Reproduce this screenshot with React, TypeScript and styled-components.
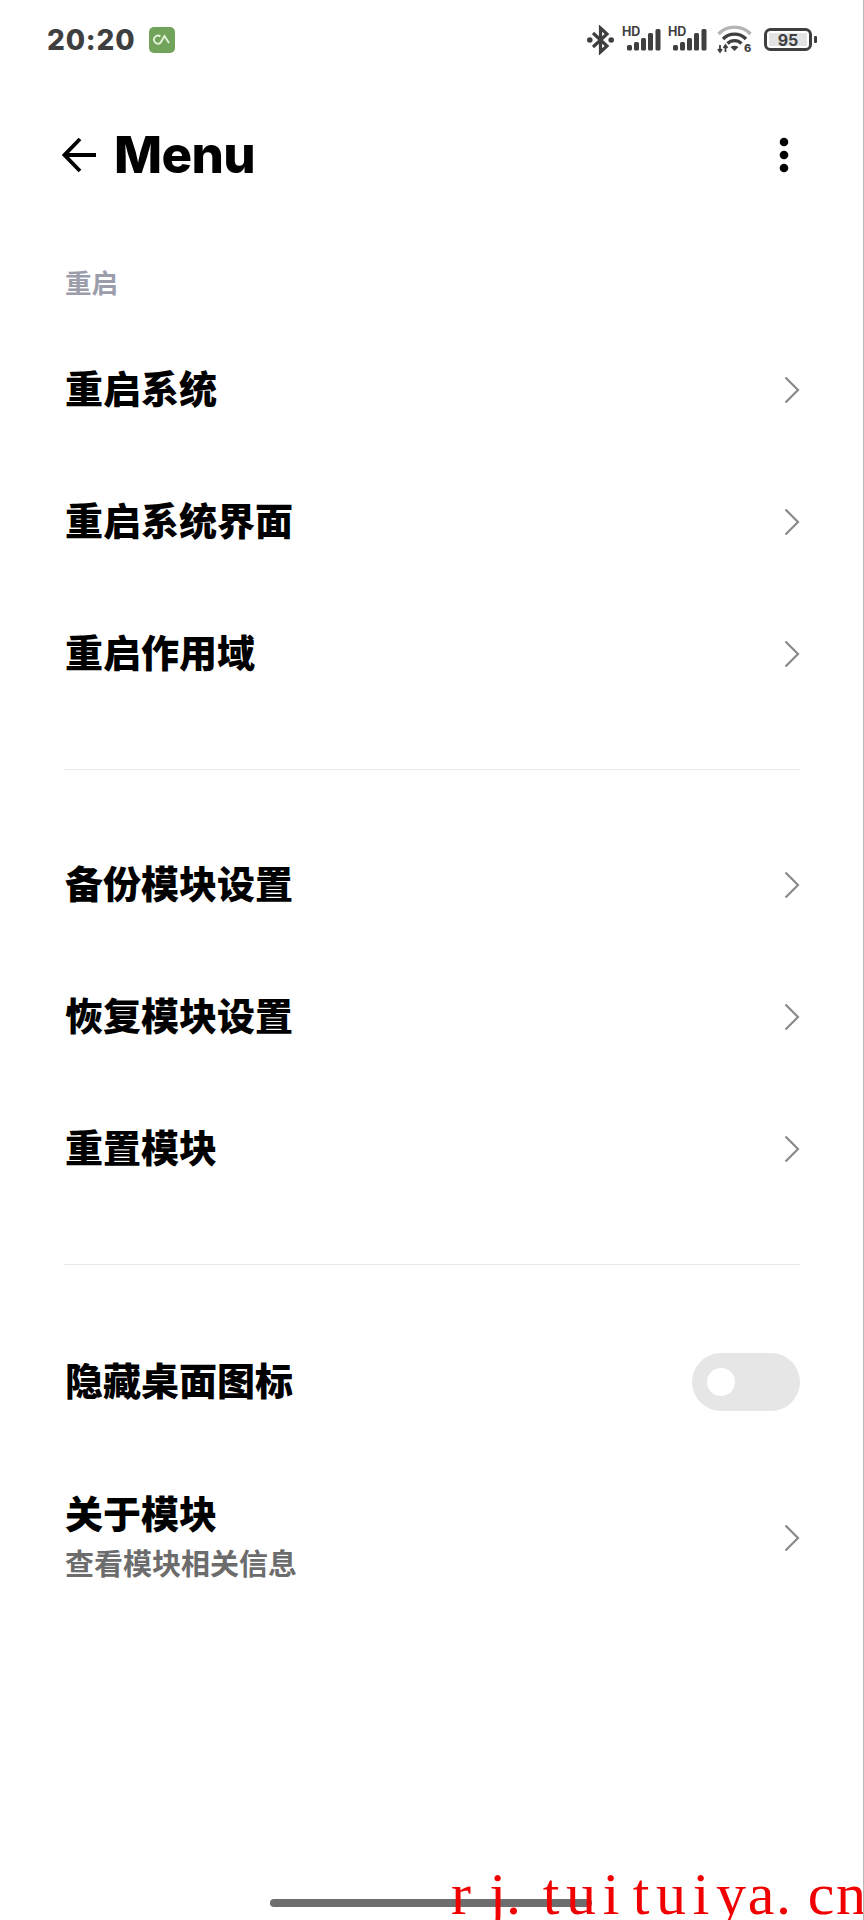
import React from "react";
import styled, { createGlobalStyle } from "styled-components";

const GlobalStyle = createGlobalStyle`
    html, body {
        margin: 0;
        padding: 0;
        background: #fff;
    }
    body {
        font-family: "Inter", "Noto Sans CJK SC", sans-serif;
    }
`

const Page = styled.div`
    position: relative;
    width: 864px;
    height: 1920px;
    overflow: hidden;
    background: #fff;
    box-sizing: border-box;
    border-right: 1px solid #b8b8b8;
`

const StatusBar = styled.div`
    display: flex;
    align-items: center;
    justify-content: space-between;
    height: 40px;
    padding: 20px 46px 0 47px;
`

const StatusLeft = styled.div`
    display: flex;
    align-items: center;
    gap: 14px;
`

const Time = styled.span`
    font-size: 28px;
    font-weight: 800;
    color: #3f3f3f;
    letter-spacing: 0.8px;
`

const StatusRight = styled.div`
    display: flex;
    align-items: center;
`

const BluetoothIcon = styled.svg`
    margin-right: 8px;
`

const SignalIcon = styled.svg`
    margin-right: 7px;
`

const WifiIcon = styled.svg`
    margin-left: 3px;
    margin-right: 12px;
`

const HeaderBar = styled.div`
    display: flex;
    align-items: center;
    height: 74px;
    margin-top: 58px;
    padding: 0 62px;
`

const Title = styled.h1`
    flex: 1;
    margin: 0 0 0 18px;
    font-size: 51px;
    font-weight: 800;
    line-height: 60px;
    letter-spacing: -0.6px;
    color: #000;
`

const DotsIcon = styled.svg`
    margin-right: 12px;
`

const SectionLabel = styled.div`
    margin-top: 73px;
    padding: 0 65px;
    font-size: 26.500px;
    line-height: 36px;
    font-weight: 700;
    color: #9b9dab;
`

const List = styled.div<{ $top?: number }>`
    display: flex;
    flex-direction: column;
    margin-top: ${(p) => p.$top ?? 0}px;
    padding: 0 63px 0 65px;
`

const Row = styled.div<{ $tall?: boolean }>`
    display: flex;
    align-items: center;
    justify-content: space-between;
    height: ${(p) => (p.$tall ? 178 : 132)}px;
`

const RowText = styled.div`
    display: flex;
    flex-direction: column;
    gap: 6px;
`

const RowTitle = styled.div<{ $raised?: boolean }>`
    margin-bottom: ${(p) => (p.$raised ? 3 : 0)}px;
    font-size: 38px;
    line-height: 50px;
    font-weight: 900;
    color: #000;
`

const RowSub = styled.div`
    font-size: 29px;
    line-height: 40px;
    font-weight: 700;
    color: #6c6c6c;
`

const Divider = styled.div<{ $top: number; $bottom: number }>`
    height: 1px;
    margin: ${(p) => p.$top}px 63px ${(p) => p.$bottom}px 64px;
    background: #e9e9eb;
`

const Switch = styled.div`
    display: flex;
    align-items: center;
    width: 108px;
    height: 58px;
    padding-left: 15px;
    box-sizing: border-box;
    border-radius: 29px;
    background: #e6e6e6;
`

const Knob = styled.div`
    width: 28px;
    height: 28px;
    border-radius: 50%;
    background: #fff;
`

const ChevronIcon = styled.svg`
    margin-top: 2px;
`

const HomePill = styled.div`
    position: absolute;
    left: 270px;
    top: 1899px;
    width: 322px;
    height: 8px;
    border-radius: 4px;
    background: #6e6e6e;
`

const Watermark = styled.div`
    position: absolute;
    left: 446px;
    top: 1860px;
    display: flex;
    font-family: "Liberation Serif", serif;
    font-size: 60px;
    line-height: 69px;
    color: #f00000;
`

const WatermarkChar = styled.span<{ $align: string }>`
    display: block;
    width: 30px;
    text-align: ${(p) => p.$align};
`

const Chevron = () => (
    <ChevronIcon width="16" height="28" viewBox="0 0 16 28" fill="none">
        <path d="M1.500 1.500 L14 14 L1.500 26.500" stroke="#8a8a8a" strokeWidth="2.200" />
    </ChevronIcon>
)

const CarrierBadge = () => (
    <svg width="26" height="26" viewBox="0 0 26 26">
        <rect width="26" height="26" rx="5" fill="#71a35a" />
        <path d="M11.500 9.500 A4 4 0 1 0 11.500 15.800 L15.500 9 L20 16" fill="none" stroke="#e6f4dc" strokeWidth="1.800" />
    </svg>
)

const Bluetooth = () => (
    <BluetoothIcon width="27" height="30" viewBox="0 0 27 30">
        <path d="M6 8 L20 21 L13.500 27 V3 L20 9 L6 22" fill="none" stroke="#3f3f3f" strokeWidth="3.200" />
        <circle cx="2.800" cy="15" r="2.800" fill="#3f3f3f" />
        <circle cx="24.200" cy="15" r="2.800" fill="#3f3f3f" />
    </BluetoothIcon>
)

const Signal = () => (
    <SignalIcon width="39" height="30" viewBox="0 0 39 30">
        <text x="0" y="11" fontFamily="Inter, sans-serif" fontSize="12.500" fontWeight="700" fill="#3f3f3f">HD</text>
        <rect x="5" y="20" width="5" height="5.500" rx="1.500" fill="#3f3f3f" />
        <rect x="12" y="17" width="5" height="8.500" rx="1.500" fill="#3f3f3f" />
        <rect x="19" y="13" width="5" height="12.500" rx="1.500" fill="#3f3f3f" />
        <rect x="26" y="8" width="5" height="17.500" rx="1.500" fill="#3f3f3f" />
        <rect x="33.500" y="4" width="5" height="21.500" rx="1.500" fill="#3f3f3f" />
    </SignalIcon>
)

const Wifi = () => (
    <WifiIcon width="35" height="30" viewBox="0 0 35 30">
        <path d="M1.500 9 A22 22 0 0 1 33.500 9" fill="none" stroke="#b4b4b4" strokeWidth="3.400" />
        <path d="M6 14 A16 16 0 0 1 29 14" fill="none" stroke="#3f3f3f" strokeWidth="3.400" />
        <path d="M10.500 18.500 A10 10 0 0 1 24.500 18.500" fill="none" stroke="#3f3f3f" strokeWidth="3.400" />
        <path d="M13.500 22 Q17.500 19.500 21.500 22 L17.500 26 Z" fill="#3f3f3f" />
        <path d="M3 20 V27 M1 24 L3 27 L5 24 M8.500 27 V20 M6.500 23 L8.500 20 L10.500 23" fill="none" stroke="#3f3f3f" strokeWidth="1.800" />
        <text x="27" y="27" fontFamily="Inter, sans-serif" fontSize="11" fontWeight="800" fill="#3f3f3f">6</text>
    </WifiIcon>
)

const Battery = () => (
    <svg width="53" height="24" viewBox="0 0 53 24">
        <rect x="1.500" y="1.500" width="45" height="20" rx="5" fill="none" stroke="#3f3f3f" strokeWidth="3" />
        <rect x="5" y="5" width="38" height="13" rx="1" fill="#e3e3e3" />
        <rect x="50" y="8" width="3" height="7" rx="1" fill="#3f3f3f" />
        <text x="24" y="17.500" textAnchor="middle" fontFamily="Inter, sans-serif" fontSize="16" fontWeight="700" fill="#3f3f3f">95</text>
    </svg>
)

const BackArrow = () => (
    <svg width="34" height="36" viewBox="0 0 34 36" fill="none">
        <path d="M34 18 H3 M18 2 L2.500 18 L18 34" stroke="#000" strokeWidth="3.800" />
    </svg>
)

const MoreDots = () => (
    <DotsIcon width="10" height="36" viewBox="0 0 10 36">
        <circle cx="5" cy="5" r="4.300" fill="#000" />
        <circle cx="5" cy="18" r="4.300" fill="#000" />
        <circle cx="5" cy="31" r="4.300" fill="#000" />
    </DotsIcon>
)

const restartRows = ["重启系统", "重启系统界面", "重启作用域"];
const moduleRows = ["备份模块设置", "恢复模块设置", "重置模块"];
const watermark = "rj.tuituiya.cn";

const charAlign = (ch: string) => {
    if (ch === ".") return "left";
    if (ch === "j") return "right";
    return "center";
}

const App: React.FC = () => {
    return (
        <Page>
            <GlobalStyle />
            <StatusBar>
                <StatusLeft>
                    <Time>20:20</Time>
                    <CarrierBadge />
                </StatusLeft>
                <StatusRight>
                    <Bluetooth />
                    <Signal />
                    <Signal />
                    <Wifi />
                    <Battery />
                </StatusRight>
            </StatusBar>
            <HeaderBar>
                <BackArrow />
                <Title>Menu</Title>
                <MoreDots />
            </HeaderBar>
            <SectionLabel>重启</SectionLabel>
            <List $top={22}>
                {restartRows.map((label) => (
                    <Row key={label}>
                        <RowTitle>{label}</RowTitle>
                        <Chevron />
                    </Row>
                ))}
            </List>
            <Divider $top={50} $bottom={48} />
            <List>
                {moduleRows.map((label) => (
                    <Row key={label}>
                        <RowTitle>{label}</RowTitle>
                        <Chevron />
                    </Row>
                ))}
            </List>
            <Divider $top={50} $bottom={51} />
            <List>
                <Row>
                    <RowTitle $raised>隐藏桌面图标</RowTitle>
                    <Switch><Knob /></Switch>
                </Row>
                <Row $tall>
                    <RowText>
                        <RowTitle>关于模块</RowTitle>
                        <RowSub>查看模块相关信息</RowSub>
                    </RowText>
                    <Chevron />
                </Row>
            </List>
            <HomePill />
            <Watermark>
                {watermark.split("").map((ch, i) => (
                    <WatermarkChar key={i} $align={charAlign(ch)}>{ch}</WatermarkChar>
                ))}
            </Watermark>
        </Page>
    );
}

export default App;
